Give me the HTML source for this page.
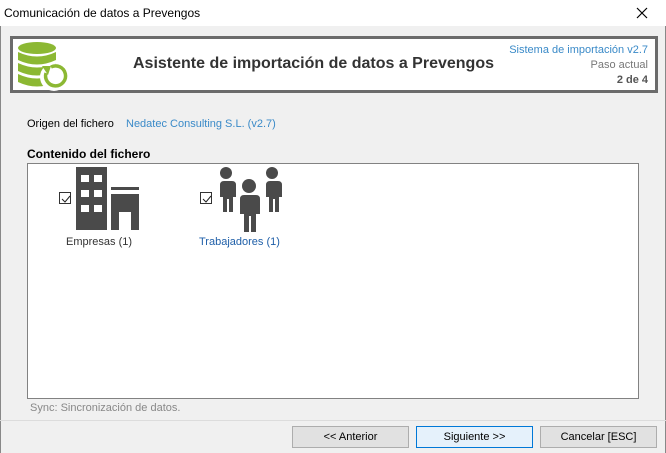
<!DOCTYPE html>
<html><head><style>
*{margin:0;padding:0;box-sizing:border-box}
body{width:666px;height:453px;background:#f0f0f0;font-family:"Liberation Sans",sans-serif;font-size:11px;color:#000;position:relative;overflow:hidden}
.abs{position:absolute}
.title{left:0;top:0;width:666px;height:26px;background:#fff;font-size:12px;line-height:26px;padding-left:4px}
.hdr{left:10px;top:36px;width:648px;height:57px;background:#fff;border:3px solid #6b6b6b}
.btn{top:426px;height:22px;border:1px solid #adadad;background:#e1e1e1;text-align:center;line-height:20px;font-size:11px}
.cb{width:12px;height:12px;border:1px solid #333;background:#fff}
</style></head><body>
<div class="abs" style="left:0;top:0;width:1px;height:453px;background:#888"></div>
<div class="abs" style="right:0;top:0;width:1px;height:453px;background:#888"></div>
<div class="abs title">Comunicación de datos a Prevengos</div>
<svg class="abs" style="left:636px;top:7px" width="12" height="12"><path d="M1 1L11 11M11 1L1 11" stroke="#000" stroke-width="1.2"/></svg>
<div class="abs hdr">
<svg class="abs" style="left:4px;top:3px" width="52" height="50" viewBox="0 0 52 50">
<g fill="#8cb833"><ellipse cx="20" cy="6" rx="19" ry="6"/>
<path d="M1 10q19 9 38 0v8q-19 9-38 0z"/><path d="M1 21q19 9 38 0v8q-19 9-38 0z"/><path d="M1 32q19 9 38 0v8q-19 9-38 0z"/></g>
<circle cx="37" cy="35" r="14" fill="#fff"/>
<path d="M29 31a10 10 0 1 0 5-6" fill="none" stroke="#8cb833" stroke-width="3.5"/>
<path d="M25 24l9 0-3 9z" fill="#8cb833"/>
</svg>
<div class="abs" style="left:120px;top:16px;font-size:16px;font-weight:bold;color:#333">Asistente de importación de datos a Prevengos</div>
<div class="abs" style="right:7px;top:4px;text-align:right;line-height:15px;font-size:11px;color:#3a8ac8">Sistema de importación v2.7<br><span style="color:#777">Paso actual</span><br><b style="color:#555">2 de 4</b></div>
</div>
<div class="abs" style="left:27px;top:118px">Origen del fichero</div>
<div class="abs" style="left:126px;top:118px;color:#3a8ac8">Nedatec Consulting S.L. (v2.7)</div>
<div class="abs" style="left:27px;top:147px;font-size:12px;font-weight:bold">Contenido del fichero</div>
<div class="abs" style="left:27px;top:163px;width:612px;height:236px;background:#fff;border:1px solid #828282"></div>
<div class="abs cb" style="left:59px;top:192px"></div>
<svg class="abs" style="left:60px;top:193px" width="12" height="12"><path d="M2 6l3 3 5-6" fill="none" stroke="#222" stroke-width="1"/></svg>
<svg class="abs" style="left:76px;top:167px" width="64" height="64">
<rect x="0" y="0" width="31" height="63" fill="#4a4a4a"/>
<g fill="#fff"><rect x="5" y="8" width="8" height="7"/><rect x="18" y="8" width="8" height="7"/><rect x="5" y="23" width="8" height="7"/><rect x="18" y="23" width="8" height="7"/><rect x="5" y="38" width="8" height="7"/><rect x="18" y="38" width="8" height="7"/></g>
<rect x="35" y="20" width="28" height="3" fill="#4a4a4a"/>
<path d="M35 27h28v36h-8v-18h-12v18h-8z" fill="#4a4a4a"/>
</svg>
<div class="abs" style="left:66px;top:236px;color:#333">Empresas (1)</div>
<div class="abs cb" style="left:200px;top:192px"></div>
<svg class="abs" style="left:201px;top:193px" width="12" height="12"><path d="M2 6l3 3 5-6" fill="none" stroke="#222" stroke-width="1"/></svg>
<svg class="abs" style="left:215px;top:167px" width="68" height="66" fill="#4a4a4a">
<circle cx="11" cy="6" r="6"/><path d="M5 14h12q4 0 4 4v12h-3v15h-4v-13h-2v13h-4v-15h-3v-12q0-4 4-4z"/>
<circle cx="57" cy="6" r="6"/><path d="M51 14h12q4 0 4 4v12h-3v15h-4v-13h-2v13h-4v-15h-3v-12q0-4 4-4z"/>
<circle cx="34" cy="19" r="7"/><path d="M27 28h14q4 0 4 4v15h-4v18h-5v-16h-2v16h-5v-18h-4v-15q0-4 4-4z"/>
</svg>
<div class="abs" style="left:199px;top:236px;color:#1f5fa8">Trabajadores (1)</div>
<div class="abs" style="left:30px;top:402px;color:#888">Sync: Sincronización de datos.</div>
<div class="abs" style="left:0;top:420px;width:666px;height:1px;background:#dcdcdc"></div>
<div class="abs btn" style="left:292px;width:117px">&lt;&lt; Anterior</div>
<div class="abs btn" style="left:416px;width:117px;border-color:#0078d7;background:#e5f1fb">Siguiente &gt;&gt;</div>
<div class="abs btn" style="left:540px;width:117px">Cancelar [ESC]</div>
</body></html>
